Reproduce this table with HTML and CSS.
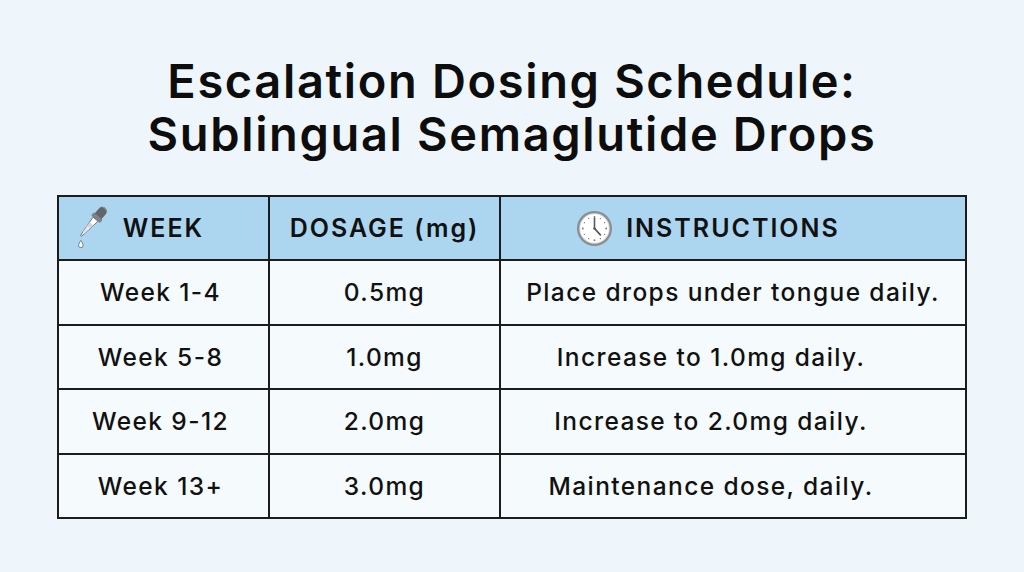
FILE: index.html
```html
<!DOCTYPE html>
<html lang="en">
<head>
<meta charset="utf-8">
<title>Escalation Dosing Schedule</title>
<link rel="stylesheet" href="styles.css">
</head>
<body>
<main class="page">
  <h1 class="title">Escalation Dosing Schedule:<br>Sublingual Semaglutide Drops</h1>
  <table class="schedule">
    <colgroup>
      <col class="c1"><col class="c2"><col class="c3">
    </colgroup>
    <thead>
      <tr>
        <th>
          <div class="head-cell">
            <svg class="icon dropper" viewBox="0 0 40 48" width="39" height="47" aria-hidden="true">
              <g transform="translate(31,3) rotate(41)">
                <path d="M-4.6,12 L-4.6,4.5 A4.6,4.6 0 0 1 4.6,4.5 L4.6,12 Z" fill="#62666a"/>
                <path d="M-2.5,1.6 A3.4,3.4 0 0 1 2.5,1.6" fill="none" stroke="#8c9094" stroke-width="1"/>
                <rect x="-6" y="11" width="12" height="4.2" rx="1" fill="#7f8286"/>
                <path d="M-3.3,15.2 L3.3,15.2 L1.3,33.5 L0.5,38 L-0.5,38 L-1.3,33.5 Z" fill="#ffffff" stroke="#6a6d70" stroke-width="0.9"/>
                <path d="M-2.6,21.5 L2.6,21.5 L2.2,25 L-2.2,28 Z" fill="#cfd5da"/>
                <path d="M-1.8,29 L1.6,27 L1.2,33.5 L-1.2,33.5 Z" fill="#dde2e6"/>
              </g>
              <path d="M6,36.2 C5,38 3.7,39.6 3.7,41.3 A2.3,2.3 0 0 0 8.3,41.3 C8.3,39.6 7,38 6,36.2 Z" fill="#ffffff" stroke="#6a6d70" stroke-width="0.9"/>
            </svg>
            <span class="head-label">WEEK</span>
          </div>
        </th>
        <th><div class="head-cell"><span class="head-label">DOSAGE (mg)</span></div></th>
        <th>
          <div class="head-cell">
            <svg class="icon clock" viewBox="0 0 40 40" width="39" height="39" aria-hidden="true">
              <circle cx="20" cy="20" r="18" fill="#8b8f93"/>
              <circle cx="20" cy="20" r="15.6" fill="#d9dcdf"/>
              <circle cx="20" cy="20" r="14.6" fill="#ffffff"/>
              <g fill="#6e7276">
                <circle cx="20" cy="8" r="0.9"/>
                <circle cx="26" cy="9.6" r="0.7"/>
                <circle cx="30.4" cy="14" r="0.7"/>
                <circle cx="32" cy="20" r="0.9"/>
                <circle cx="30.4" cy="26" r="0.7"/>
                <circle cx="26" cy="30.4" r="0.7"/>
                <circle cx="20" cy="32" r="0.9"/>
                <circle cx="14" cy="30.4" r="0.7"/>
                <circle cx="9.6" cy="26" r="0.7"/>
                <circle cx="8" cy="20" r="0.9"/>
                <circle cx="9.6" cy="14" r="0.7"/>
                <circle cx="14" cy="9.6" r="0.7"/>
              </g>
              <path d="M20,20 L20,9.5" stroke="#55595d" stroke-width="1.6" stroke-linecap="round"/>
              <path d="M20,20 L26,26.5" stroke="#55595d" stroke-width="1.8" stroke-linecap="round"/>
              <circle cx="20" cy="20" r="1.2" fill="#55595d"/>
            </svg>
            <span class="head-label">INSTRUCTIONS</span>
          </div>
        </th>
      </tr>
    </thead>
    <tbody>
      <tr><td class="week">Week 1-4</td><td>0.5mg</td><td>Place drops under tongue daily.</td></tr>
      <tr><td class="week">Week 5-8</td><td>1.0mg</td><td class="shifted">Increase to 1.0mg daily.</td></tr>
      <tr><td class="week">Week 9-12</td><td>2.0mg</td><td class="shifted">Increase to 2.0mg daily.</td></tr>
      <tr><td class="week">Week 13+</td><td>3.0mg</td><td class="shifted">Maintenance dose, daily.</td></tr>
    </tbody>
  </table>
</main>
</body>
</html>
```

FILE: styles.css
```css
html, body {
  margin: 0;
  padding: 0;
}

body {
  background: #eff6fb;
  color: #111111;
  font-family: Inter, "Noto Sans", "DejaVu Sans", sans-serif;
}

.page {
  width: 1024px;
  height: 572px;
  box-sizing: border-box;
  padding-top: 54px;
  display: flex;
  flex-direction: column;
  align-items: center;
}

.title {
  margin: 0;
  font-size: 47px;
  line-height: 53px;
  font-weight: 600;
  text-align: center;
  letter-spacing: 1.65px;
  color: #0d0d0d;
}

.schedule {
  margin-top: 35px;
  width: 908px;
  border-collapse: collapse;
  table-layout: fixed;
  border: 2px solid #1c1c1c;
}

.c1 { width: 211px; }
.c2 { width: 231px; }
.c3 { width: 466px; }

.schedule th,
.schedule td {
  border: 2px solid #1c1c1c;
  padding: 0;
  text-align: center;
  vertical-align: middle;
}

.schedule th {
  background: #acd6f0;
  height: 62px;
  font-size: 25px;
  font-weight: 600;
  letter-spacing: 2px;
}

.schedule td {
  background: #f5fafd;
  height: 62.5px;
  font-size: 24.5px;
  font-weight: 500;
  letter-spacing: 1.4px;
}

.schedule td.week {
  padding-right: 6px;
}

.schedule td.shifted {
  padding-right: 44px;
}

.head-cell {
  display: grid;
  grid-template-columns: 1fr auto 1fr;
  align-items: center;
}

.head-label {
  grid-column: 2;
}

.icon {
  grid-column: 1;
  grid-row: 1;
  justify-self: end;
  display: block;
}

.dropper {
  margin-right: 9px;
}

.clock {
  margin-right: 12px;
}
```
